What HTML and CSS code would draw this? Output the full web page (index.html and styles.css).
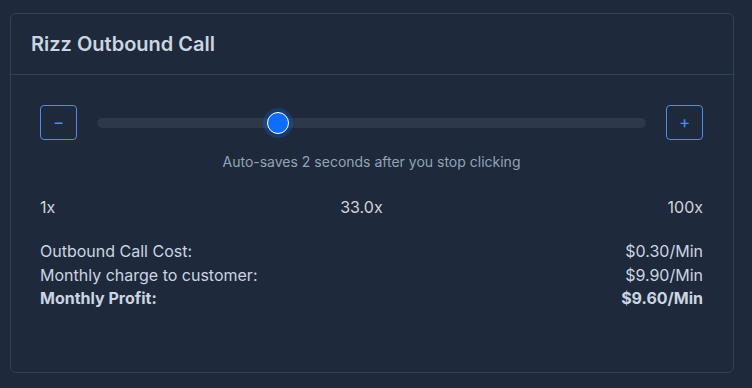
FILE: index.html
```html
<!DOCTYPE html>
<html lang="en">
<head>
    <meta charset="UTF-8">
    <meta name="viewport" content="width=device-width, initial-scale=1.0">
    <title>Rizz Outbound Call</title>
    <link rel="stylesheet" href="styles.css">
</head>
<body>
    <div class="card">
        <div class="card-header">
            <h2>Rizz Outbound Call</h2>
        </div>
        <div class="card-body">
            <div class="slider-row">
                <button class="step-btn" id="minus">&minus;</button>
                <input type="range" class="slider" id="multiplier" min="1" max="100" step="0.1" value="33">
                <button class="step-btn" id="plus">+</button>
            </div>
            <div class="hint">Auto-saves 2 seconds after you stop clicking</div>

            <div class="scale">
                <span>1x</span>
                <span id="current">33.0x</span>
                <span>100x</span>
            </div>

            <div class="costs">
                <div class="cost-row">
                    <span>Outbound Call Cost:</span>
                    <span>$0.30/Min</span>
                </div>
                <div class="cost-row">
                    <span>Monthly charge to customer:</span>
                    <span>$9.90/Min</span>
                </div>
                <div class="cost-row total">
                    <span>Monthly Profit:</span>
                    <span>$9.60/Min</span>
                </div>
            </div>
        </div>
    </div>
</body>
</html>
```

FILE: styles.css
```css
* {
    box-sizing: border-box;
}

body {
    margin: 0;
    padding: 13px 10px;
    background-color: #1e293b;
    font-family: 'Inter', 'Noto Sans', sans-serif;
    color: #cbd5e1;
}

.card {
    width: 724px;
    height: 360px;
    background-color: #1e293b;
    border: 1px solid #334155;
    border-radius: 6px;
}

.card-header {
    padding: 16px 20px;
    border-bottom: 1px solid #334155;
}

.card-header h2 {
    margin: 0;
    font-size: 20px;
    line-height: 28px;
    font-weight: 600;
    color: #cbd5e1;
}

.card-body {
    padding: 30px 30px 30px 29px;
}

.slider-row {
    display: flex;
    align-items: center;
    gap: 20px;
}

.step-btn {
    width: 37px;
    height: 35px;
    flex: none;
    background: transparent;
    border: 1px solid #4b8fea;
    border-radius: 4px;
    color: #4b8fea;
    font-family: 'Inter', sans-serif;
    font-size: 17px;
    font-weight: 400;
    line-height: 1;
    padding: 0;
    cursor: pointer;
}

.slider {
    -webkit-appearance: none;
    appearance: none;
    flex: 1;
    height: 10px;
    margin: 0;
    background: #2d3849;
    border-radius: 5px;
    outline: none;
}

.slider::-webkit-slider-thumb {
    -webkit-appearance: none;
    appearance: none;
    width: 22px;
    height: 22px;
    border-radius: 50%;
    background: #0d6efd;
    border: 1.5px solid #ffffff;
    box-shadow: 0 0 0 4px rgba(13, 110, 253, 0.25);
    cursor: pointer;
}

.hint {
    margin-top: 12px;
    text-align: center;
    font-size: 14px;
    line-height: 20px;
    color: #94a3b8;
}

.scale {
    display: flex;
    justify-content: space-between;
    margin-top: 23px;
    font-size: 16px;
    line-height: 24px;
    color: #d1d5db;
}

.costs {
    margin-top: 21px;
    font-size: 16px;
    line-height: 23.5px;
    color: #cbd5e1;
}

.cost-row {
    display: flex;
    justify-content: space-between;
}

.cost-row.total {
    font-weight: 700;
}
```
